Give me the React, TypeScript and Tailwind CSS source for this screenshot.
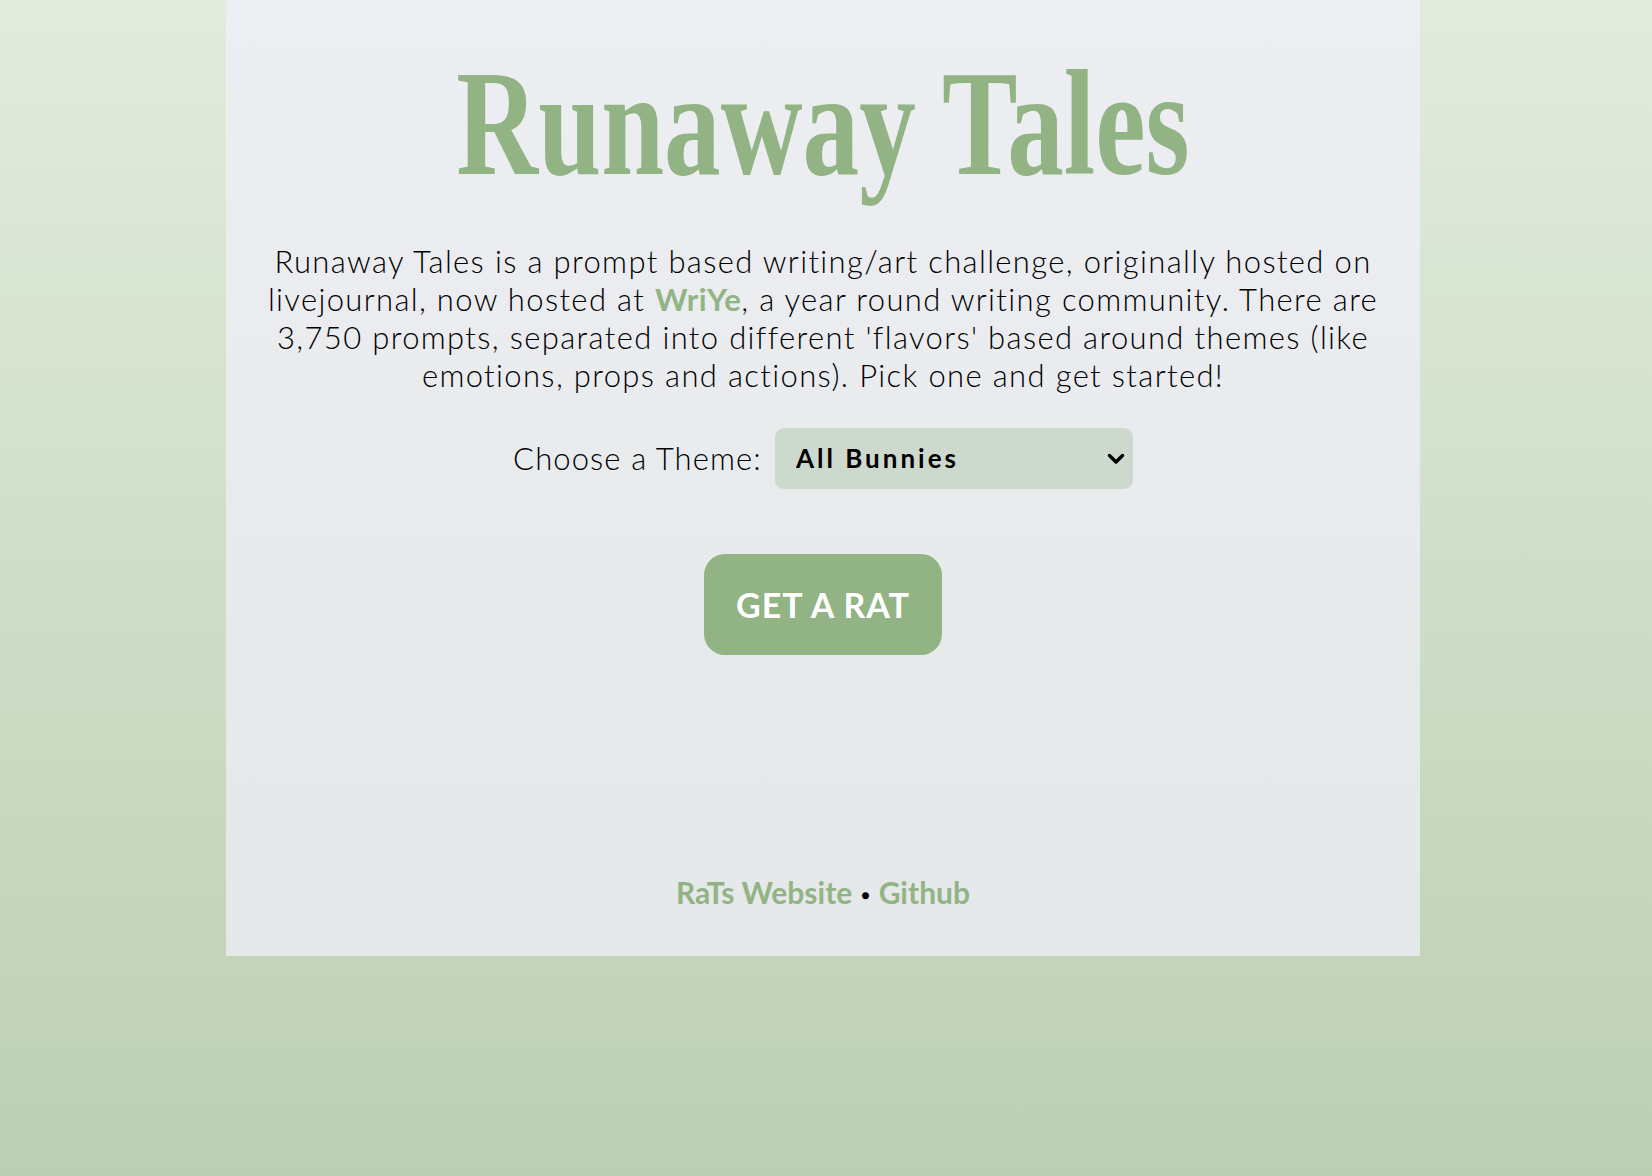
import { useState } from "react";

const themes = [
  "All Bunnies",
  "Emotions",
  "Props",
  "Actions",
  "Places",
  "Characters",
];

export default function App() {
  const [theme, setTheme] = useState("All Bunnies");

  return (
    <div className="min-h-screen bg-gradient-to-b from-[#e2ecdd] to-[#bccfb3] font-['Lato',sans-serif] text-black">
      <main className="ml-[226px] flex w-[1194px] flex-col items-center bg-gradient-to-b from-[#edeef2] to-[#e4e8e8] pt-[48px] pb-[43px]">
        <h1 className="w-full scale-x-[0.75] text-center font-['Liberation_Serif',serif] text-[151px] font-bold leading-none text-[#92b485]">
          Runaway Tales
        </h1>

        <p className="mt-[43px] w-[1112px] text-center text-[31px] font-light leading-[38px] tracking-[1.35px]">
          Runaway Tales is a prompt based writing/art challenge, originally
          hosted on livejournal, now hosted at{" "}
          <a href="#" className="font-bold tracking-[0.5px] text-[#92b485]">
            WriYe
          </a>
          , a year round writing community. There are 3,750 prompts, separated
          into different 'flavors' based around themes (like emotions, props
          and actions). Pick one and get started!
        </p>

        <div className="mt-[34px] flex items-center gap-[13px]">
          <label htmlFor="theme" className="text-[31px] font-light tracking-[1.1px]">
            Choose a Theme:
          </label>
          <div className="relative">
            <select
              id="theme"
              value={theme}
              onChange={(e) => setTheme(e.target.value)}
              className="h-[61px] w-[358px] appearance-none rounded-[9px] bg-[#ced9cd] pl-[21px] text-[26px] font-bold tracking-[3px] text-black outline-none"
            >
              {themes.map((t) => (
                <option key={t} value={t}>
                  {t}
                </option>
              ))}
            </select>
            <svg
              className="pointer-events-none absolute top-[25px] right-[8px] h-[12px] w-[18px]"
              viewBox="0 0 18 12"
              fill="none"
              stroke="black"
              strokeWidth="3.4"
              strokeLinecap="round"
              strokeLinejoin="round"
            >
              <path d="M2.5 2.5 L9 9 L15.5 2.5" />
            </svg>
          </div>
        </div>

        <button className="mt-[65px] h-[101px] w-[238px] rounded-[21px] bg-[#92b485] text-[34px] font-bold tracking-[1px] text-white">
          GET A RAT
        </button>

        <footer className="mt-[219px] text-[30px] font-bold leading-[36px]">
          <a href="#" className="text-[#92b485]">
            RaTs Website
          </a>
          <span className="mx-[9px] text-[14px] align-[4px]">●</span>
          <a href="#" className="text-[#92b485]">
            Github
          </a>
        </footer>
      </main>
    </div>
  );
}
